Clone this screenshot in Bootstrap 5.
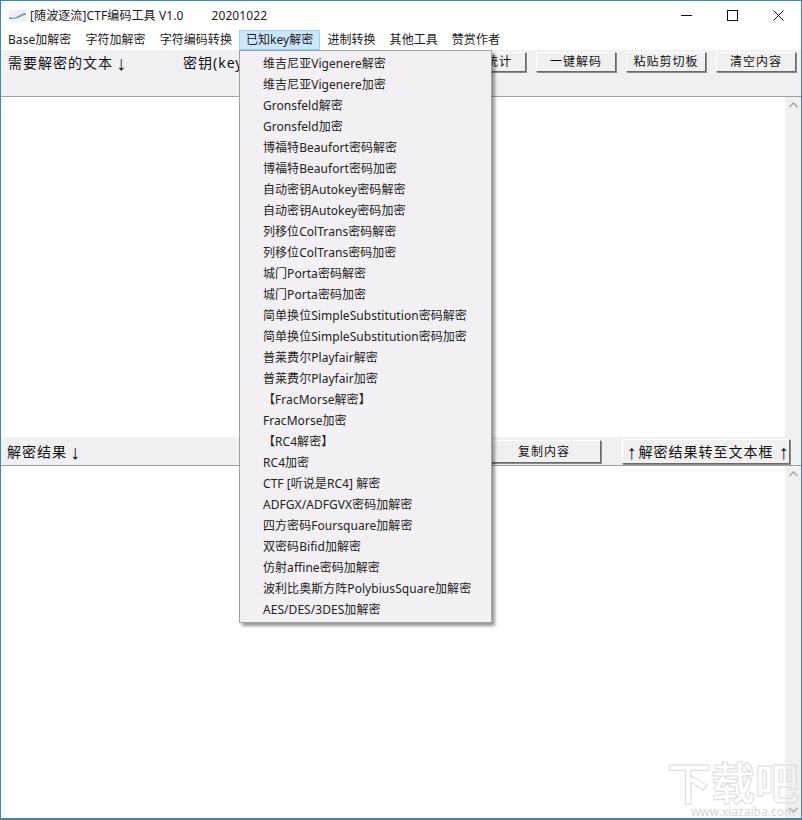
<!DOCTYPE html>
<html lang="zh-CN">
<head>
  <meta charset="UTF-8">
  <title>[随波逐流]CTF编码工具 V1.0</title>
  <link href="https://cdn.jsdelivr.net/npm/bootstrap@5.3.3/dist/css/bootstrap.min.css" rel="stylesheet">
  <style>
    html, body { height: 820px; overflow: hidden; background: #fff; }
    body { font-family: "Noto Sans", "Noto Sans CJK SC", sans-serif; font-size: 12px; color: #1a1a1a; }
    .app-win { height: 820px; border: 1px solid #3b87ad; border-bottom-width: 2px; position: relative; overflow: hidden; }
    .app-title { height: 29px; padding-left: 8px; letter-spacing: .1px; }
    .app-title .when { margin-left: 28px; }
    .win-btn { width: 46px; height: 29px; }
    .app-menu { height: 20px; letter-spacing: .05px; }
    .app-menu span { padding: 0 7px; line-height: 20px; white-space: nowrap; }
    .app-menu .open { background: #cce8ff; box-shadow: inset 0 0 0 1px #99d1ff; }
    .tool-row { background: #f0eff2; }
    .top-row { height: 46px; padding-top: 2px; }
    .lbl { font-size: 14px; line-height: 21px; letter-spacing: 1px; color: #111; white-space: nowrap; }
    .up-dn { display: inline-block; width: 7px; text-align: center; font-family: "Liberation Sans", sans-serif; font-style: normal; font-size: 20px; line-height: 0; letter-spacing: 0; vertical-align: -2px; }
    .lbl .up-dn { margin-left: 3px; }
    .top-lbl { margin-left: 7px; }
    .key-lbl { margin-left: 60px; }
    .res-lbl { margin-left: 6px; }
    .tool-btns { gap: 10px; margin-right: 5px; }
    .win-push { background: #f0f0f0; border: 1px solid; border-color: #fff #6a6a6a #6a6a6a #fff; box-shadow: 1px 1px 0 #8a8a8a; border-radius: 0; padding: 0; color: #111; letter-spacing: 1px; white-space: nowrap; }
    .push-a { width: 80px; height: 20px; line-height: 18px; font-size: 12px; }
    .text-box { border-top: 1px solid #a0a0a0; background: #fff; min-height: 0; }
    .box-one { height: 341px; }
    .box-two { flex: 1; }
    .scroll-rail { width: 16px; background: #f0f0f0; }
    .scroll-rail svg { display: block; margin: 5px auto; }
    .res-row { height: 28px; }
    .copy-btn { width: 114px; height: 23px; line-height: 21px; font-size: 12px; margin-right: 21px; }
    .move-btn { width: 168px; height: 25px; line-height: 23px; font-size: 14px; margin-right: 11px; }
    .move-btn .up-dn:first-child { margin-right: 5px; }
    .move-btn .up-dn:last-child { margin-left: 5px; }
    .app-drop.dropdown-menu { position: absolute; display: block; left: 238px; top: 49px; width: 253px; height: 573px; padding: 2px 0 0; margin: 0; background: #f2f0f2; border: 1px solid #a0a0a0; border-radius: 0; box-shadow: 3px 3px 3px rgba(0,0,0,.4); z-index: 5; }
    .app-drop .dropdown-item { height: 21px; line-height: 21px; padding: 0 0 0 23px; font-size: 12px; letter-spacing: .05px; color: #222; white-space: nowrap; background: none; }
    .site-mark { position: absolute; right: 0; bottom: 0; width: 136px; text-align: center; color: transparent; pointer-events: none; z-index: 2; white-space: nowrap; }
    .site-mark b { display: block; font-size: 44px; line-height: 44px; font-weight: 700; -webkit-text-stroke: 1px #dcdcdc; }
    .site-mark i { display: block; font-size: 12px; line-height: 13px; padding-left: 20px; font-style: normal; color: #d4d4d4; }
  </style>
</head>
<body>
  <div class="app-win d-flex flex-column">
    <div class="app-title d-flex align-items-center">
      <svg width="17" height="12" viewBox="0 0 17 12" class="me-1 flex-shrink-0">
        <rect width="17" height="12" fill="#eef1f3"/>
        <path d="M0 7C4 8 6 8 9 6S14 3 17 3V5C14 5 12 7 9 8S3 9 0 9Z" fill="#7f9fb5"/>
      </svg>
      <span>[随波逐流]CTF编码工具 V1.0</span>
      <span class="when">20201022</span>
      <div class="ms-auto d-flex">
        <div class="win-btn d-flex align-items-center justify-content-center">
          <svg width="11" height="11"><path d="M0 5.5H11" stroke="#111"/></svg>
        </div>
        <div class="win-btn d-flex align-items-center justify-content-center">
          <svg width="11" height="11"><rect x=".5" y=".5" width="10" height="10" fill="none" stroke="#111"/></svg>
        </div>
        <div class="win-btn d-flex align-items-center justify-content-center">
          <svg width="11" height="11"><path d="M.5 .5L10.5 10.5M10.5 .5L.5 10.5" stroke="#111"/></svg>
        </div>
      </div>
    </div>

    <div class="app-menu d-flex">
      <span>Base加解密</span>
      <span>字符加解密</span>
      <span>字符编码转换</span>
      <span class="open">已知key解密</span>
      <span>进制转换</span>
      <span>其他工具</span>
      <span>赞赏作者</span>
    </div>

    <div class="tool-row top-row d-flex align-items-start">
      <span class="lbl top-lbl">需要解密的文本<em class="up-dn">↓</em></span>
      <span class="lbl key-lbl">密钥(key)</span>
      <div class="ms-auto d-flex tool-btns">
        <button class="btn win-push push-a">字频统计</button>
        <button class="btn win-push push-a">一键解码</button>
        <button class="btn win-push push-a">粘贴剪切板</button>
        <button class="btn win-push push-a">清空内容</button>
      </div>
    </div>

    <div class="text-box box-one d-flex justify-content-end">
      <div class="scroll-rail">
        <svg width="9" height="6"><path d="M.5 5L4.5 1L8.5 5" fill="none" stroke="#a6a6a6" stroke-width="1.5"/></svg>
      </div>
    </div>

    <div class="tool-row res-row d-flex align-items-center">
      <span class="lbl res-lbl">解密结果<em class="up-dn">↓</em></span>
      <div class="ms-auto d-flex align-items-center">
        <button class="btn win-push copy-btn">复制内容</button>
        <button class="btn win-push move-btn"><em class="up-dn">↑</em>解密结果转至文本框<em class="up-dn">↑</em></button>
      </div>
    </div>

    <div class="text-box box-two d-flex justify-content-end">
      <div class="scroll-rail d-flex flex-column justify-content-between">
        <svg width="9" height="6"><path d="M.5 5L4.5 1L8.5 5" fill="none" stroke="#a6a6a6" stroke-width="1.5"/></svg>
        <svg width="9" height="6"><path d="M.5 1L4.5 5L8.5 1" fill="none" stroke="#a6a6a6" stroke-width="1.5"/></svg>
      </div>
    </div>

    <div class="dropdown-menu app-drop">
      <a class="dropdown-item">维吉尼亚Vigenere解密</a>
      <a class="dropdown-item">维吉尼亚Vigenere加密</a>
      <a class="dropdown-item">Gronsfeld解密</a>
      <a class="dropdown-item">Gronsfeld加密</a>
      <a class="dropdown-item">博福特Beaufort密码解密</a>
      <a class="dropdown-item">博福特Beaufort密码加密</a>
      <a class="dropdown-item">自动密钥Autokey密码解密</a>
      <a class="dropdown-item">自动密钥Autokey密码加密</a>
      <a class="dropdown-item">列移位ColTrans密码解密</a>
      <a class="dropdown-item">列移位ColTrans密码加密</a>
      <a class="dropdown-item">城门Porta密码解密</a>
      <a class="dropdown-item">城门Porta密码加密</a>
      <a class="dropdown-item">简单换位SimpleSubstitution密码解密</a>
      <a class="dropdown-item">简单换位SimpleSubstitution密码加密</a>
      <a class="dropdown-item">普莱费尔Playfair解密</a>
      <a class="dropdown-item">普莱费尔Playfair加密</a>
      <a class="dropdown-item">【FracMorse解密】</a>
      <a class="dropdown-item">FracMorse加密</a>
      <a class="dropdown-item">【RC4解密】</a>
      <a class="dropdown-item">RC4加密</a>
      <a class="dropdown-item">CTF [听说是RC4] 解密</a>
      <a class="dropdown-item">ADFGX/ADFGVX密码加解密</a>
      <a class="dropdown-item">四方密码Foursquare加解密</a>
      <a class="dropdown-item">双密码Bifid加解密</a>
      <a class="dropdown-item">仿射affine密码加解密</a>
      <a class="dropdown-item">波利比奥斯方阵PolybiusSquare加解密</a>
      <a class="dropdown-item">AES/DES/3DES加解密</a>
    </div>

    <div class="site-mark"><b>下载吧</b><i>www.xiazaiba.com</i></div>
  </div>
</body>
</html>
